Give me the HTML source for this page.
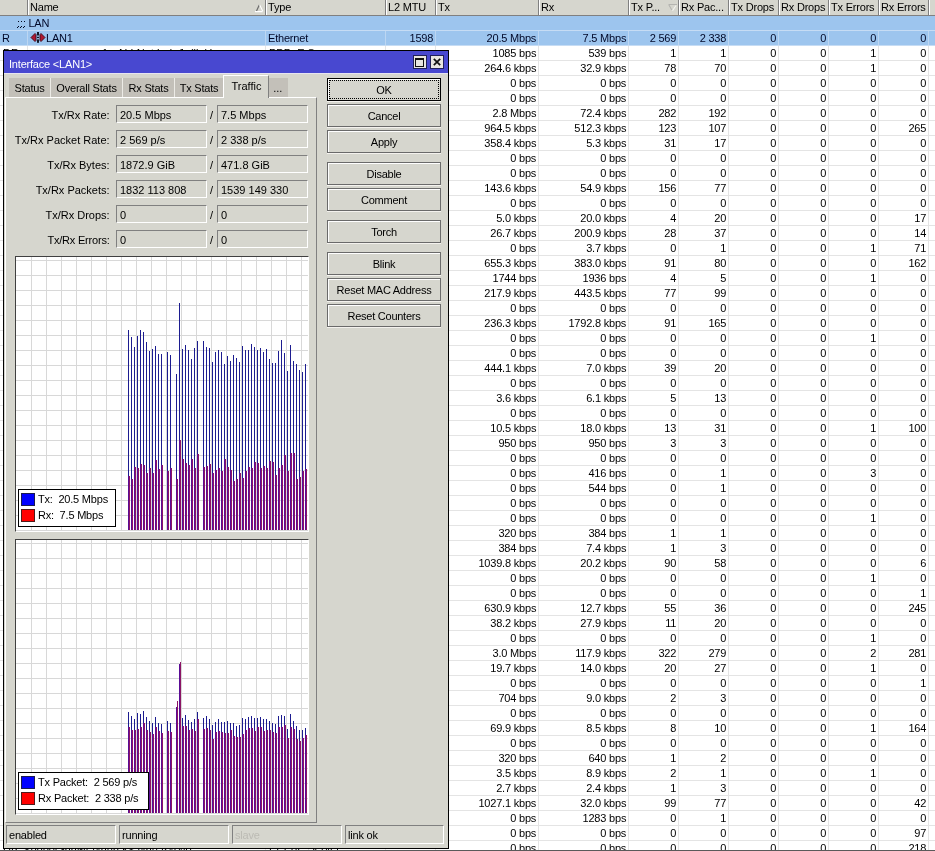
<!DOCTYPE html>
<html><head><meta charset="utf-8"><style>
html,body{margin:0;padding:0}
body{width:935px;height:851px;overflow:hidden;position:relative;background:#fff;font-family:'Liberation Sans',sans-serif;font-size:11px;color:#000}
div{position:absolute}
.t{white-space:nowrap}
</style></head><body>
<div id="wrap" style="left:0;top:0;width:935px;height:851px;will-change:transform"><div style="left:0px;top:0px;width:935px;height:15px;background:#d6d6ce"></div><div style="left:0px;top:15px;width:935px;height:1px;background:#808080"></div><div style="left:27px;top:0px;width:1px;height:15px;background:#808080"></div><div style="left:28px;top:0px;width:1px;height:15px;background:#fff"></div><div style="left:265px;top:0px;width:1px;height:15px;background:#808080"></div><div style="left:266px;top:0px;width:1px;height:15px;background:#fff"></div><div style="left:385px;top:0px;width:1px;height:15px;background:#808080"></div><div style="left:386px;top:0px;width:1px;height:15px;background:#fff"></div><div style="left:435px;top:0px;width:1px;height:15px;background:#808080"></div><div style="left:436px;top:0px;width:1px;height:15px;background:#fff"></div><div style="left:538px;top:0px;width:1px;height:15px;background:#808080"></div><div style="left:539px;top:0px;width:1px;height:15px;background:#fff"></div><div style="left:628px;top:0px;width:1px;height:15px;background:#808080"></div><div style="left:629px;top:0px;width:1px;height:15px;background:#fff"></div><div style="left:678px;top:0px;width:1px;height:15px;background:#808080"></div><div style="left:679px;top:0px;width:1px;height:15px;background:#fff"></div><div style="left:728px;top:0px;width:1px;height:15px;background:#808080"></div><div style="left:729px;top:0px;width:1px;height:15px;background:#fff"></div><div style="left:778px;top:0px;width:1px;height:15px;background:#808080"></div><div style="left:779px;top:0px;width:1px;height:15px;background:#fff"></div><div style="left:828px;top:0px;width:1px;height:15px;background:#808080"></div><div style="left:829px;top:0px;width:1px;height:15px;background:#fff"></div><div style="left:878px;top:0px;width:1px;height:15px;background:#808080"></div><div style="left:879px;top:0px;width:1px;height:15px;background:#fff"></div><div style="left:928px;top:0px;width:1px;height:15px;background:#808080"></div><div style="left:929px;top:0px;width:1px;height:15px;background:#fff"></div><div class="t" style="left:30px;top:0px;text-align:left;line-height:15px;letter-spacing:-0.2px">Name</div><div class="t" style="left:268px;top:0px;text-align:left;line-height:15px;letter-spacing:-0.2px">Type</div><div class="t" style="left:388px;top:0px;text-align:left;line-height:15px;letter-spacing:-0.2px">L2 MTU</div><div class="t" style="left:438px;top:0px;text-align:left;line-height:15px;letter-spacing:-0.2px">Tx</div><div class="t" style="left:541px;top:0px;text-align:left;line-height:15px;letter-spacing:-0.2px">Rx</div><div class="t" style="left:631px;top:0px;text-align:left;line-height:15px;letter-spacing:-0.2px">Tx P...</div><div class="t" style="left:681px;top:0px;text-align:left;line-height:15px;letter-spacing:-0.2px">Rx Pac...</div><div class="t" style="left:731px;top:0px;text-align:left;line-height:15px;letter-spacing:-0.2px">Tx Drops</div><div class="t" style="left:781px;top:0px;text-align:left;line-height:15px;letter-spacing:-0.2px">Rx Drops</div><div class="t" style="left:831px;top:0px;text-align:left;line-height:15px;letter-spacing:-0.2px">Tx Errors</div><div class="t" style="left:881px;top:0px;text-align:left;line-height:15px;letter-spacing:-0.2px">Rx Errors</div><svg style="position:absolute;left:250px;top:0" width="20" height="15"><path d="M256.5 11 L259.3 5" transform="translate(-250 0)" stroke="#6a6a6a" stroke-width="1.2" fill="none"/><path d="M259.7 5 L262.8 11.2 M255 11.6 L262.5 11.6" transform="translate(-250 0)" stroke="#ffffff" stroke-width="1.1" fill="none"/></svg><svg style="position:absolute;left:660px;top:0" width="20" height="15"><path d="M668.5 4.5 L677 4.5 M668.8 4.8 L671.8 10" transform="translate(-660 0)" stroke="#b4b4b0" stroke-width="1.1" fill="none"/><path d="M676 5.5 L672.5 10.8" transform="translate(-660 0)" stroke="#f4f4f0" stroke-width="1.1" fill="none"/></svg><div style="left:0px;top:16px;width:935px;height:14px;background:#9dc5ee"></div><div style="left:0px;top:30px;width:935px;height:1px;background:#c6dcf4"></div><div style="left:0px;top:31px;width:935px;height:14px;background:#9dc5ee"></div><div style="left:0px;top:45px;width:935px;height:1px;background:#c6dcf4"></div><div class="t" style="left:17px;top:16px;text-align:left;line-height:15px;color:#000828;letter-spacing:-0.2px"><span style="color:transparent">;;;</span>&nbsp;LAN</div><svg style="position:absolute;left:0;top:0" width="30" height="30"><rect x="18" y="21" width="1" height="1" fill="#000820"/><rect x="18" y="26" width="1" height="1" fill="#000820"/><rect x="17" y="27" width="1" height="1" fill="#000820"/><rect x="21" y="21" width="1" height="1" fill="#000820"/><rect x="21" y="26" width="1" height="1" fill="#000820"/><rect x="20" y="27" width="1" height="1" fill="#000820"/><rect x="24" y="21" width="1" height="1" fill="#000820"/><rect x="24" y="26" width="1" height="1" fill="#000820"/><rect x="23" y="27" width="1" height="1" fill="#000820"/></svg><div style="left:27px;top:31px;width:1px;height:14px;background:#bcd6f2"></div><div style="left:265px;top:31px;width:1px;height:14px;background:#bcd6f2"></div><div style="left:385px;top:31px;width:1px;height:14px;background:#bcd6f2"></div><div style="left:435px;top:31px;width:1px;height:14px;background:#bcd6f2"></div><div style="left:538px;top:31px;width:1px;height:14px;background:#bcd6f2"></div><div style="left:628px;top:31px;width:1px;height:14px;background:#bcd6f2"></div><div style="left:678px;top:31px;width:1px;height:14px;background:#bcd6f2"></div><div style="left:728px;top:31px;width:1px;height:14px;background:#bcd6f2"></div><div style="left:778px;top:31px;width:1px;height:14px;background:#bcd6f2"></div><div style="left:828px;top:31px;width:1px;height:14px;background:#bcd6f2"></div><div style="left:878px;top:31px;width:1px;height:14px;background:#bcd6f2"></div><div style="left:928px;top:31px;width:1px;height:14px;background:#bcd6f2"></div><div style="left:0px;top:60px;width:935px;height:1px;background:#e4e4e4"></div><div style="left:0px;top:75px;width:935px;height:1px;background:#e4e4e4"></div><div style="left:0px;top:90px;width:935px;height:1px;background:#e4e4e4"></div><div style="left:0px;top:105px;width:935px;height:1px;background:#e4e4e4"></div><div style="left:0px;top:120px;width:935px;height:1px;background:#e4e4e4"></div><div style="left:0px;top:135px;width:935px;height:1px;background:#e4e4e4"></div><div style="left:0px;top:150px;width:935px;height:1px;background:#e4e4e4"></div><div style="left:0px;top:165px;width:935px;height:1px;background:#e4e4e4"></div><div style="left:0px;top:180px;width:935px;height:1px;background:#e4e4e4"></div><div style="left:0px;top:195px;width:935px;height:1px;background:#e4e4e4"></div><div style="left:0px;top:210px;width:935px;height:1px;background:#e4e4e4"></div><div style="left:0px;top:225px;width:935px;height:1px;background:#e4e4e4"></div><div style="left:0px;top:240px;width:935px;height:1px;background:#e4e4e4"></div><div style="left:0px;top:255px;width:935px;height:1px;background:#e4e4e4"></div><div style="left:0px;top:270px;width:935px;height:1px;background:#e4e4e4"></div><div style="left:0px;top:285px;width:935px;height:1px;background:#e4e4e4"></div><div style="left:0px;top:300px;width:935px;height:1px;background:#e4e4e4"></div><div style="left:0px;top:315px;width:935px;height:1px;background:#e4e4e4"></div><div style="left:0px;top:330px;width:935px;height:1px;background:#e4e4e4"></div><div style="left:0px;top:345px;width:935px;height:1px;background:#e4e4e4"></div><div style="left:0px;top:360px;width:935px;height:1px;background:#e4e4e4"></div><div style="left:0px;top:375px;width:935px;height:1px;background:#e4e4e4"></div><div style="left:0px;top:390px;width:935px;height:1px;background:#e4e4e4"></div><div style="left:0px;top:405px;width:935px;height:1px;background:#e4e4e4"></div><div style="left:0px;top:420px;width:935px;height:1px;background:#e4e4e4"></div><div style="left:0px;top:435px;width:935px;height:1px;background:#e4e4e4"></div><div style="left:0px;top:450px;width:935px;height:1px;background:#e4e4e4"></div><div style="left:0px;top:465px;width:935px;height:1px;background:#e4e4e4"></div><div style="left:0px;top:480px;width:935px;height:1px;background:#e4e4e4"></div><div style="left:0px;top:495px;width:935px;height:1px;background:#e4e4e4"></div><div style="left:0px;top:510px;width:935px;height:1px;background:#e4e4e4"></div><div style="left:0px;top:525px;width:935px;height:1px;background:#e4e4e4"></div><div style="left:0px;top:540px;width:935px;height:1px;background:#e4e4e4"></div><div style="left:0px;top:555px;width:935px;height:1px;background:#e4e4e4"></div><div style="left:0px;top:570px;width:935px;height:1px;background:#e4e4e4"></div><div style="left:0px;top:585px;width:935px;height:1px;background:#e4e4e4"></div><div style="left:0px;top:600px;width:935px;height:1px;background:#e4e4e4"></div><div style="left:0px;top:615px;width:935px;height:1px;background:#e4e4e4"></div><div style="left:0px;top:630px;width:935px;height:1px;background:#e4e4e4"></div><div style="left:0px;top:645px;width:935px;height:1px;background:#e4e4e4"></div><div style="left:0px;top:660px;width:935px;height:1px;background:#e4e4e4"></div><div style="left:0px;top:675px;width:935px;height:1px;background:#e4e4e4"></div><div style="left:0px;top:690px;width:935px;height:1px;background:#e4e4e4"></div><div style="left:0px;top:705px;width:935px;height:1px;background:#e4e4e4"></div><div style="left:0px;top:720px;width:935px;height:1px;background:#e4e4e4"></div><div style="left:0px;top:735px;width:935px;height:1px;background:#e4e4e4"></div><div style="left:0px;top:750px;width:935px;height:1px;background:#e4e4e4"></div><div style="left:0px;top:765px;width:935px;height:1px;background:#e4e4e4"></div><div style="left:0px;top:780px;width:935px;height:1px;background:#e4e4e4"></div><div style="left:0px;top:795px;width:935px;height:1px;background:#e4e4e4"></div><div style="left:0px;top:810px;width:935px;height:1px;background:#e4e4e4"></div><div style="left:0px;top:825px;width:935px;height:1px;background:#e4e4e4"></div><div style="left:0px;top:840px;width:935px;height:1px;background:#e4e4e4"></div><div style="left:0px;top:855px;width:935px;height:1px;background:#e4e4e4"></div><div style="left:27px;top:46px;width:1px;height:805px;background:#e4e4e4"></div><div style="left:265px;top:46px;width:1px;height:805px;background:#e4e4e4"></div><div style="left:385px;top:46px;width:1px;height:805px;background:#e4e4e4"></div><div style="left:435px;top:46px;width:1px;height:805px;background:#e4e4e4"></div><div style="left:538px;top:46px;width:1px;height:805px;background:#e4e4e4"></div><div style="left:628px;top:46px;width:1px;height:805px;background:#e4e4e4"></div><div style="left:678px;top:46px;width:1px;height:805px;background:#e4e4e4"></div><div style="left:728px;top:46px;width:1px;height:805px;background:#e4e4e4"></div><div style="left:778px;top:46px;width:1px;height:805px;background:#e4e4e4"></div><div style="left:828px;top:46px;width:1px;height:805px;background:#e4e4e4"></div><div style="left:878px;top:46px;width:1px;height:805px;background:#e4e4e4"></div><div style="left:928px;top:46px;width:1px;height:805px;background:#e4e4e4"></div><div class="t" style="left:2px;top:31px;text-align:left;line-height:15px;color:#000828">R</div><div class="t" style="left:46px;top:31px;text-align:left;line-height:15px;color:#000828;letter-spacing:-0.2px">LAN1</div><div class="t" style="left:268px;top:31px;text-align:left;line-height:15px;letter-spacing:-0.2px;color:#000828">Ethernet</div><div class="t" style="left:385px;top:31px;width:48.2px;text-align:right;line-height:15px;letter-spacing:-0.2px;color:#000828">1598</div><svg style="position:absolute;left:0;top:0" width="50" height="46" viewBox="0 0 50 46"><path d="M31 37.5 L35 33.5 L36 34.5 L36 40.5 L35 41.5 Z" fill="#b01830" stroke="#3a0818" stroke-width="0.9"/><path d="M45 37.5 L41 33.5 L40 34.5 L40 40.5 L41 41.5 Z" fill="#b01830" stroke="#3a0818" stroke-width="0.9"/><rect x="37" y="32" width="2" height="3.5" fill="#101828"/><rect x="37" y="36.8" width="2" height="1.3" fill="#101828"/><rect x="37" y="39.4" width="2" height="3.4" fill="#101828"/></svg><div class="t" style="left:435px;top:31px;width:101.2px;text-align:right;line-height:15px;letter-spacing:-0.2px;color:#000828">20.5 Mbps</div><div class="t" style="left:538px;top:31px;width:88.2px;text-align:right;line-height:15px;letter-spacing:-0.2px;color:#000828">7.5 Mbps</div><div class="t" style="left:628px;top:31px;width:48.2px;text-align:right;line-height:15px;letter-spacing:-0.2px;color:#000828">2 569</div><div class="t" style="left:678px;top:31px;width:48.2px;text-align:right;line-height:15px;letter-spacing:-0.2px;color:#000828">2 338</div><div class="t" style="left:728px;top:31px;width:48.2px;text-align:right;line-height:15px;letter-spacing:-0.2px;color:#000828">0</div><div class="t" style="left:778px;top:31px;width:48.2px;text-align:right;line-height:15px;letter-spacing:-0.2px;color:#000828">0</div><div class="t" style="left:828px;top:31px;width:48.2px;text-align:right;line-height:15px;letter-spacing:-0.2px;color:#000828">0</div><div class="t" style="left:878px;top:31px;width:48.2px;text-align:right;line-height:15px;letter-spacing:-0.2px;color:#000828">0</div><div class="t" style="left:435px;top:46px;width:101.2px;text-align:right;line-height:15px;letter-spacing:-0.2px">1085 bps</div><div class="t" style="left:538px;top:46px;width:88.2px;text-align:right;line-height:15px;letter-spacing:-0.2px">539 bps</div><div class="t" style="left:628px;top:46px;width:48.2px;text-align:right;line-height:15px;letter-spacing:-0.2px">1</div><div class="t" style="left:678px;top:46px;width:48.2px;text-align:right;line-height:15px;letter-spacing:-0.2px">1</div><div class="t" style="left:728px;top:46px;width:48.2px;text-align:right;line-height:15px;letter-spacing:-0.2px">0</div><div class="t" style="left:778px;top:46px;width:48.2px;text-align:right;line-height:15px;letter-spacing:-0.2px">0</div><div class="t" style="left:828px;top:46px;width:48.2px;text-align:right;line-height:15px;letter-spacing:-0.2px">1</div><div class="t" style="left:878px;top:46px;width:48.2px;text-align:right;line-height:15px;letter-spacing:-0.2px">0</div><div class="t" style="left:435px;top:61px;width:101.2px;text-align:right;line-height:15px;letter-spacing:-0.2px">264.6 kbps</div><div class="t" style="left:538px;top:61px;width:88.2px;text-align:right;line-height:15px;letter-spacing:-0.2px">32.9 kbps</div><div class="t" style="left:628px;top:61px;width:48.2px;text-align:right;line-height:15px;letter-spacing:-0.2px">78</div><div class="t" style="left:678px;top:61px;width:48.2px;text-align:right;line-height:15px;letter-spacing:-0.2px">70</div><div class="t" style="left:728px;top:61px;width:48.2px;text-align:right;line-height:15px;letter-spacing:-0.2px">0</div><div class="t" style="left:778px;top:61px;width:48.2px;text-align:right;line-height:15px;letter-spacing:-0.2px">0</div><div class="t" style="left:828px;top:61px;width:48.2px;text-align:right;line-height:15px;letter-spacing:-0.2px">1</div><div class="t" style="left:878px;top:61px;width:48.2px;text-align:right;line-height:15px;letter-spacing:-0.2px">0</div><div class="t" style="left:435px;top:76px;width:101.2px;text-align:right;line-height:15px;letter-spacing:-0.2px">0 bps</div><div class="t" style="left:538px;top:76px;width:88.2px;text-align:right;line-height:15px;letter-spacing:-0.2px">0 bps</div><div class="t" style="left:628px;top:76px;width:48.2px;text-align:right;line-height:15px;letter-spacing:-0.2px">0</div><div class="t" style="left:678px;top:76px;width:48.2px;text-align:right;line-height:15px;letter-spacing:-0.2px">0</div><div class="t" style="left:728px;top:76px;width:48.2px;text-align:right;line-height:15px;letter-spacing:-0.2px">0</div><div class="t" style="left:778px;top:76px;width:48.2px;text-align:right;line-height:15px;letter-spacing:-0.2px">0</div><div class="t" style="left:828px;top:76px;width:48.2px;text-align:right;line-height:15px;letter-spacing:-0.2px">0</div><div class="t" style="left:878px;top:76px;width:48.2px;text-align:right;line-height:15px;letter-spacing:-0.2px">0</div><div class="t" style="left:435px;top:91px;width:101.2px;text-align:right;line-height:15px;letter-spacing:-0.2px">0 bps</div><div class="t" style="left:538px;top:91px;width:88.2px;text-align:right;line-height:15px;letter-spacing:-0.2px">0 bps</div><div class="t" style="left:628px;top:91px;width:48.2px;text-align:right;line-height:15px;letter-spacing:-0.2px">0</div><div class="t" style="left:678px;top:91px;width:48.2px;text-align:right;line-height:15px;letter-spacing:-0.2px">0</div><div class="t" style="left:728px;top:91px;width:48.2px;text-align:right;line-height:15px;letter-spacing:-0.2px">0</div><div class="t" style="left:778px;top:91px;width:48.2px;text-align:right;line-height:15px;letter-spacing:-0.2px">0</div><div class="t" style="left:828px;top:91px;width:48.2px;text-align:right;line-height:15px;letter-spacing:-0.2px">0</div><div class="t" style="left:878px;top:91px;width:48.2px;text-align:right;line-height:15px;letter-spacing:-0.2px">0</div><div class="t" style="left:435px;top:106px;width:101.2px;text-align:right;line-height:15px;letter-spacing:-0.2px">2.8 Mbps</div><div class="t" style="left:538px;top:106px;width:88.2px;text-align:right;line-height:15px;letter-spacing:-0.2px">72.4 kbps</div><div class="t" style="left:628px;top:106px;width:48.2px;text-align:right;line-height:15px;letter-spacing:-0.2px">282</div><div class="t" style="left:678px;top:106px;width:48.2px;text-align:right;line-height:15px;letter-spacing:-0.2px">192</div><div class="t" style="left:728px;top:106px;width:48.2px;text-align:right;line-height:15px;letter-spacing:-0.2px">0</div><div class="t" style="left:778px;top:106px;width:48.2px;text-align:right;line-height:15px;letter-spacing:-0.2px">0</div><div class="t" style="left:828px;top:106px;width:48.2px;text-align:right;line-height:15px;letter-spacing:-0.2px">0</div><div class="t" style="left:878px;top:106px;width:48.2px;text-align:right;line-height:15px;letter-spacing:-0.2px">0</div><div class="t" style="left:435px;top:121px;width:101.2px;text-align:right;line-height:15px;letter-spacing:-0.2px">964.5 kbps</div><div class="t" style="left:538px;top:121px;width:88.2px;text-align:right;line-height:15px;letter-spacing:-0.2px">512.3 kbps</div><div class="t" style="left:628px;top:121px;width:48.2px;text-align:right;line-height:15px;letter-spacing:-0.2px">123</div><div class="t" style="left:678px;top:121px;width:48.2px;text-align:right;line-height:15px;letter-spacing:-0.2px">107</div><div class="t" style="left:728px;top:121px;width:48.2px;text-align:right;line-height:15px;letter-spacing:-0.2px">0</div><div class="t" style="left:778px;top:121px;width:48.2px;text-align:right;line-height:15px;letter-spacing:-0.2px">0</div><div class="t" style="left:828px;top:121px;width:48.2px;text-align:right;line-height:15px;letter-spacing:-0.2px">0</div><div class="t" style="left:878px;top:121px;width:48.2px;text-align:right;line-height:15px;letter-spacing:-0.2px">265</div><div class="t" style="left:435px;top:136px;width:101.2px;text-align:right;line-height:15px;letter-spacing:-0.2px">358.4 kbps</div><div class="t" style="left:538px;top:136px;width:88.2px;text-align:right;line-height:15px;letter-spacing:-0.2px">5.3 kbps</div><div class="t" style="left:628px;top:136px;width:48.2px;text-align:right;line-height:15px;letter-spacing:-0.2px">31</div><div class="t" style="left:678px;top:136px;width:48.2px;text-align:right;line-height:15px;letter-spacing:-0.2px">17</div><div class="t" style="left:728px;top:136px;width:48.2px;text-align:right;line-height:15px;letter-spacing:-0.2px">0</div><div class="t" style="left:778px;top:136px;width:48.2px;text-align:right;line-height:15px;letter-spacing:-0.2px">0</div><div class="t" style="left:828px;top:136px;width:48.2px;text-align:right;line-height:15px;letter-spacing:-0.2px">0</div><div class="t" style="left:878px;top:136px;width:48.2px;text-align:right;line-height:15px;letter-spacing:-0.2px">0</div><div class="t" style="left:435px;top:151px;width:101.2px;text-align:right;line-height:15px;letter-spacing:-0.2px">0 bps</div><div class="t" style="left:538px;top:151px;width:88.2px;text-align:right;line-height:15px;letter-spacing:-0.2px">0 bps</div><div class="t" style="left:628px;top:151px;width:48.2px;text-align:right;line-height:15px;letter-spacing:-0.2px">0</div><div class="t" style="left:678px;top:151px;width:48.2px;text-align:right;line-height:15px;letter-spacing:-0.2px">0</div><div class="t" style="left:728px;top:151px;width:48.2px;text-align:right;line-height:15px;letter-spacing:-0.2px">0</div><div class="t" style="left:778px;top:151px;width:48.2px;text-align:right;line-height:15px;letter-spacing:-0.2px">0</div><div class="t" style="left:828px;top:151px;width:48.2px;text-align:right;line-height:15px;letter-spacing:-0.2px">0</div><div class="t" style="left:878px;top:151px;width:48.2px;text-align:right;line-height:15px;letter-spacing:-0.2px">0</div><div class="t" style="left:435px;top:166px;width:101.2px;text-align:right;line-height:15px;letter-spacing:-0.2px">0 bps</div><div class="t" style="left:538px;top:166px;width:88.2px;text-align:right;line-height:15px;letter-spacing:-0.2px">0 bps</div><div class="t" style="left:628px;top:166px;width:48.2px;text-align:right;line-height:15px;letter-spacing:-0.2px">0</div><div class="t" style="left:678px;top:166px;width:48.2px;text-align:right;line-height:15px;letter-spacing:-0.2px">0</div><div class="t" style="left:728px;top:166px;width:48.2px;text-align:right;line-height:15px;letter-spacing:-0.2px">0</div><div class="t" style="left:778px;top:166px;width:48.2px;text-align:right;line-height:15px;letter-spacing:-0.2px">0</div><div class="t" style="left:828px;top:166px;width:48.2px;text-align:right;line-height:15px;letter-spacing:-0.2px">0</div><div class="t" style="left:878px;top:166px;width:48.2px;text-align:right;line-height:15px;letter-spacing:-0.2px">0</div><div class="t" style="left:435px;top:181px;width:101.2px;text-align:right;line-height:15px;letter-spacing:-0.2px">143.6 kbps</div><div class="t" style="left:538px;top:181px;width:88.2px;text-align:right;line-height:15px;letter-spacing:-0.2px">54.9 kbps</div><div class="t" style="left:628px;top:181px;width:48.2px;text-align:right;line-height:15px;letter-spacing:-0.2px">156</div><div class="t" style="left:678px;top:181px;width:48.2px;text-align:right;line-height:15px;letter-spacing:-0.2px">77</div><div class="t" style="left:728px;top:181px;width:48.2px;text-align:right;line-height:15px;letter-spacing:-0.2px">0</div><div class="t" style="left:778px;top:181px;width:48.2px;text-align:right;line-height:15px;letter-spacing:-0.2px">0</div><div class="t" style="left:828px;top:181px;width:48.2px;text-align:right;line-height:15px;letter-spacing:-0.2px">0</div><div class="t" style="left:878px;top:181px;width:48.2px;text-align:right;line-height:15px;letter-spacing:-0.2px">0</div><div class="t" style="left:435px;top:196px;width:101.2px;text-align:right;line-height:15px;letter-spacing:-0.2px">0 bps</div><div class="t" style="left:538px;top:196px;width:88.2px;text-align:right;line-height:15px;letter-spacing:-0.2px">0 bps</div><div class="t" style="left:628px;top:196px;width:48.2px;text-align:right;line-height:15px;letter-spacing:-0.2px">0</div><div class="t" style="left:678px;top:196px;width:48.2px;text-align:right;line-height:15px;letter-spacing:-0.2px">0</div><div class="t" style="left:728px;top:196px;width:48.2px;text-align:right;line-height:15px;letter-spacing:-0.2px">0</div><div class="t" style="left:778px;top:196px;width:48.2px;text-align:right;line-height:15px;letter-spacing:-0.2px">0</div><div class="t" style="left:828px;top:196px;width:48.2px;text-align:right;line-height:15px;letter-spacing:-0.2px">0</div><div class="t" style="left:878px;top:196px;width:48.2px;text-align:right;line-height:15px;letter-spacing:-0.2px">0</div><div class="t" style="left:435px;top:211px;width:101.2px;text-align:right;line-height:15px;letter-spacing:-0.2px">5.0 kbps</div><div class="t" style="left:538px;top:211px;width:88.2px;text-align:right;line-height:15px;letter-spacing:-0.2px">20.0 kbps</div><div class="t" style="left:628px;top:211px;width:48.2px;text-align:right;line-height:15px;letter-spacing:-0.2px">4</div><div class="t" style="left:678px;top:211px;width:48.2px;text-align:right;line-height:15px;letter-spacing:-0.2px">20</div><div class="t" style="left:728px;top:211px;width:48.2px;text-align:right;line-height:15px;letter-spacing:-0.2px">0</div><div class="t" style="left:778px;top:211px;width:48.2px;text-align:right;line-height:15px;letter-spacing:-0.2px">0</div><div class="t" style="left:828px;top:211px;width:48.2px;text-align:right;line-height:15px;letter-spacing:-0.2px">0</div><div class="t" style="left:878px;top:211px;width:48.2px;text-align:right;line-height:15px;letter-spacing:-0.2px">17</div><div class="t" style="left:435px;top:226px;width:101.2px;text-align:right;line-height:15px;letter-spacing:-0.2px">26.7 kbps</div><div class="t" style="left:538px;top:226px;width:88.2px;text-align:right;line-height:15px;letter-spacing:-0.2px">200.9 kbps</div><div class="t" style="left:628px;top:226px;width:48.2px;text-align:right;line-height:15px;letter-spacing:-0.2px">28</div><div class="t" style="left:678px;top:226px;width:48.2px;text-align:right;line-height:15px;letter-spacing:-0.2px">37</div><div class="t" style="left:728px;top:226px;width:48.2px;text-align:right;line-height:15px;letter-spacing:-0.2px">0</div><div class="t" style="left:778px;top:226px;width:48.2px;text-align:right;line-height:15px;letter-spacing:-0.2px">0</div><div class="t" style="left:828px;top:226px;width:48.2px;text-align:right;line-height:15px;letter-spacing:-0.2px">0</div><div class="t" style="left:878px;top:226px;width:48.2px;text-align:right;line-height:15px;letter-spacing:-0.2px">14</div><div class="t" style="left:435px;top:241px;width:101.2px;text-align:right;line-height:15px;letter-spacing:-0.2px">0 bps</div><div class="t" style="left:538px;top:241px;width:88.2px;text-align:right;line-height:15px;letter-spacing:-0.2px">3.7 kbps</div><div class="t" style="left:628px;top:241px;width:48.2px;text-align:right;line-height:15px;letter-spacing:-0.2px">0</div><div class="t" style="left:678px;top:241px;width:48.2px;text-align:right;line-height:15px;letter-spacing:-0.2px">1</div><div class="t" style="left:728px;top:241px;width:48.2px;text-align:right;line-height:15px;letter-spacing:-0.2px">0</div><div class="t" style="left:778px;top:241px;width:48.2px;text-align:right;line-height:15px;letter-spacing:-0.2px">0</div><div class="t" style="left:828px;top:241px;width:48.2px;text-align:right;line-height:15px;letter-spacing:-0.2px">1</div><div class="t" style="left:878px;top:241px;width:48.2px;text-align:right;line-height:15px;letter-spacing:-0.2px">71</div><div class="t" style="left:435px;top:256px;width:101.2px;text-align:right;line-height:15px;letter-spacing:-0.2px">655.3 kbps</div><div class="t" style="left:538px;top:256px;width:88.2px;text-align:right;line-height:15px;letter-spacing:-0.2px">383.0 kbps</div><div class="t" style="left:628px;top:256px;width:48.2px;text-align:right;line-height:15px;letter-spacing:-0.2px">91</div><div class="t" style="left:678px;top:256px;width:48.2px;text-align:right;line-height:15px;letter-spacing:-0.2px">80</div><div class="t" style="left:728px;top:256px;width:48.2px;text-align:right;line-height:15px;letter-spacing:-0.2px">0</div><div class="t" style="left:778px;top:256px;width:48.2px;text-align:right;line-height:15px;letter-spacing:-0.2px">0</div><div class="t" style="left:828px;top:256px;width:48.2px;text-align:right;line-height:15px;letter-spacing:-0.2px">0</div><div class="t" style="left:878px;top:256px;width:48.2px;text-align:right;line-height:15px;letter-spacing:-0.2px">162</div><div class="t" style="left:435px;top:271px;width:101.2px;text-align:right;line-height:15px;letter-spacing:-0.2px">1744 bps</div><div class="t" style="left:538px;top:271px;width:88.2px;text-align:right;line-height:15px;letter-spacing:-0.2px">1936 bps</div><div class="t" style="left:628px;top:271px;width:48.2px;text-align:right;line-height:15px;letter-spacing:-0.2px">4</div><div class="t" style="left:678px;top:271px;width:48.2px;text-align:right;line-height:15px;letter-spacing:-0.2px">5</div><div class="t" style="left:728px;top:271px;width:48.2px;text-align:right;line-height:15px;letter-spacing:-0.2px">0</div><div class="t" style="left:778px;top:271px;width:48.2px;text-align:right;line-height:15px;letter-spacing:-0.2px">0</div><div class="t" style="left:828px;top:271px;width:48.2px;text-align:right;line-height:15px;letter-spacing:-0.2px">1</div><div class="t" style="left:878px;top:271px;width:48.2px;text-align:right;line-height:15px;letter-spacing:-0.2px">0</div><div class="t" style="left:435px;top:286px;width:101.2px;text-align:right;line-height:15px;letter-spacing:-0.2px">217.9 kbps</div><div class="t" style="left:538px;top:286px;width:88.2px;text-align:right;line-height:15px;letter-spacing:-0.2px">443.5 kbps</div><div class="t" style="left:628px;top:286px;width:48.2px;text-align:right;line-height:15px;letter-spacing:-0.2px">77</div><div class="t" style="left:678px;top:286px;width:48.2px;text-align:right;line-height:15px;letter-spacing:-0.2px">99</div><div class="t" style="left:728px;top:286px;width:48.2px;text-align:right;line-height:15px;letter-spacing:-0.2px">0</div><div class="t" style="left:778px;top:286px;width:48.2px;text-align:right;line-height:15px;letter-spacing:-0.2px">0</div><div class="t" style="left:828px;top:286px;width:48.2px;text-align:right;line-height:15px;letter-spacing:-0.2px">0</div><div class="t" style="left:878px;top:286px;width:48.2px;text-align:right;line-height:15px;letter-spacing:-0.2px">0</div><div class="t" style="left:435px;top:301px;width:101.2px;text-align:right;line-height:15px;letter-spacing:-0.2px">0 bps</div><div class="t" style="left:538px;top:301px;width:88.2px;text-align:right;line-height:15px;letter-spacing:-0.2px">0 bps</div><div class="t" style="left:628px;top:301px;width:48.2px;text-align:right;line-height:15px;letter-spacing:-0.2px">0</div><div class="t" style="left:678px;top:301px;width:48.2px;text-align:right;line-height:15px;letter-spacing:-0.2px">0</div><div class="t" style="left:728px;top:301px;width:48.2px;text-align:right;line-height:15px;letter-spacing:-0.2px">0</div><div class="t" style="left:778px;top:301px;width:48.2px;text-align:right;line-height:15px;letter-spacing:-0.2px">0</div><div class="t" style="left:828px;top:301px;width:48.2px;text-align:right;line-height:15px;letter-spacing:-0.2px">0</div><div class="t" style="left:878px;top:301px;width:48.2px;text-align:right;line-height:15px;letter-spacing:-0.2px">0</div><div class="t" style="left:435px;top:316px;width:101.2px;text-align:right;line-height:15px;letter-spacing:-0.2px">236.3 kbps</div><div class="t" style="left:538px;top:316px;width:88.2px;text-align:right;line-height:15px;letter-spacing:-0.2px">1792.8 kbps</div><div class="t" style="left:628px;top:316px;width:48.2px;text-align:right;line-height:15px;letter-spacing:-0.2px">91</div><div class="t" style="left:678px;top:316px;width:48.2px;text-align:right;line-height:15px;letter-spacing:-0.2px">165</div><div class="t" style="left:728px;top:316px;width:48.2px;text-align:right;line-height:15px;letter-spacing:-0.2px">0</div><div class="t" style="left:778px;top:316px;width:48.2px;text-align:right;line-height:15px;letter-spacing:-0.2px">0</div><div class="t" style="left:828px;top:316px;width:48.2px;text-align:right;line-height:15px;letter-spacing:-0.2px">0</div><div class="t" style="left:878px;top:316px;width:48.2px;text-align:right;line-height:15px;letter-spacing:-0.2px">0</div><div class="t" style="left:435px;top:331px;width:101.2px;text-align:right;line-height:15px;letter-spacing:-0.2px">0 bps</div><div class="t" style="left:538px;top:331px;width:88.2px;text-align:right;line-height:15px;letter-spacing:-0.2px">0 bps</div><div class="t" style="left:628px;top:331px;width:48.2px;text-align:right;line-height:15px;letter-spacing:-0.2px">0</div><div class="t" style="left:678px;top:331px;width:48.2px;text-align:right;line-height:15px;letter-spacing:-0.2px">0</div><div class="t" style="left:728px;top:331px;width:48.2px;text-align:right;line-height:15px;letter-spacing:-0.2px">0</div><div class="t" style="left:778px;top:331px;width:48.2px;text-align:right;line-height:15px;letter-spacing:-0.2px">0</div><div class="t" style="left:828px;top:331px;width:48.2px;text-align:right;line-height:15px;letter-spacing:-0.2px">1</div><div class="t" style="left:878px;top:331px;width:48.2px;text-align:right;line-height:15px;letter-spacing:-0.2px">0</div><div class="t" style="left:435px;top:346px;width:101.2px;text-align:right;line-height:15px;letter-spacing:-0.2px">0 bps</div><div class="t" style="left:538px;top:346px;width:88.2px;text-align:right;line-height:15px;letter-spacing:-0.2px">0 bps</div><div class="t" style="left:628px;top:346px;width:48.2px;text-align:right;line-height:15px;letter-spacing:-0.2px">0</div><div class="t" style="left:678px;top:346px;width:48.2px;text-align:right;line-height:15px;letter-spacing:-0.2px">0</div><div class="t" style="left:728px;top:346px;width:48.2px;text-align:right;line-height:15px;letter-spacing:-0.2px">0</div><div class="t" style="left:778px;top:346px;width:48.2px;text-align:right;line-height:15px;letter-spacing:-0.2px">0</div><div class="t" style="left:828px;top:346px;width:48.2px;text-align:right;line-height:15px;letter-spacing:-0.2px">0</div><div class="t" style="left:878px;top:346px;width:48.2px;text-align:right;line-height:15px;letter-spacing:-0.2px">0</div><div class="t" style="left:435px;top:361px;width:101.2px;text-align:right;line-height:15px;letter-spacing:-0.2px">444.1 kbps</div><div class="t" style="left:538px;top:361px;width:88.2px;text-align:right;line-height:15px;letter-spacing:-0.2px">7.0 kbps</div><div class="t" style="left:628px;top:361px;width:48.2px;text-align:right;line-height:15px;letter-spacing:-0.2px">39</div><div class="t" style="left:678px;top:361px;width:48.2px;text-align:right;line-height:15px;letter-spacing:-0.2px">20</div><div class="t" style="left:728px;top:361px;width:48.2px;text-align:right;line-height:15px;letter-spacing:-0.2px">0</div><div class="t" style="left:778px;top:361px;width:48.2px;text-align:right;line-height:15px;letter-spacing:-0.2px">0</div><div class="t" style="left:828px;top:361px;width:48.2px;text-align:right;line-height:15px;letter-spacing:-0.2px">0</div><div class="t" style="left:878px;top:361px;width:48.2px;text-align:right;line-height:15px;letter-spacing:-0.2px">0</div><div class="t" style="left:435px;top:376px;width:101.2px;text-align:right;line-height:15px;letter-spacing:-0.2px">0 bps</div><div class="t" style="left:538px;top:376px;width:88.2px;text-align:right;line-height:15px;letter-spacing:-0.2px">0 bps</div><div class="t" style="left:628px;top:376px;width:48.2px;text-align:right;line-height:15px;letter-spacing:-0.2px">0</div><div class="t" style="left:678px;top:376px;width:48.2px;text-align:right;line-height:15px;letter-spacing:-0.2px">0</div><div class="t" style="left:728px;top:376px;width:48.2px;text-align:right;line-height:15px;letter-spacing:-0.2px">0</div><div class="t" style="left:778px;top:376px;width:48.2px;text-align:right;line-height:15px;letter-spacing:-0.2px">0</div><div class="t" style="left:828px;top:376px;width:48.2px;text-align:right;line-height:15px;letter-spacing:-0.2px">0</div><div class="t" style="left:878px;top:376px;width:48.2px;text-align:right;line-height:15px;letter-spacing:-0.2px">0</div><div class="t" style="left:435px;top:391px;width:101.2px;text-align:right;line-height:15px;letter-spacing:-0.2px">3.6 kbps</div><div class="t" style="left:538px;top:391px;width:88.2px;text-align:right;line-height:15px;letter-spacing:-0.2px">6.1 kbps</div><div class="t" style="left:628px;top:391px;width:48.2px;text-align:right;line-height:15px;letter-spacing:-0.2px">5</div><div class="t" style="left:678px;top:391px;width:48.2px;text-align:right;line-height:15px;letter-spacing:-0.2px">13</div><div class="t" style="left:728px;top:391px;width:48.2px;text-align:right;line-height:15px;letter-spacing:-0.2px">0</div><div class="t" style="left:778px;top:391px;width:48.2px;text-align:right;line-height:15px;letter-spacing:-0.2px">0</div><div class="t" style="left:828px;top:391px;width:48.2px;text-align:right;line-height:15px;letter-spacing:-0.2px">0</div><div class="t" style="left:878px;top:391px;width:48.2px;text-align:right;line-height:15px;letter-spacing:-0.2px">0</div><div class="t" style="left:435px;top:406px;width:101.2px;text-align:right;line-height:15px;letter-spacing:-0.2px">0 bps</div><div class="t" style="left:538px;top:406px;width:88.2px;text-align:right;line-height:15px;letter-spacing:-0.2px">0 bps</div><div class="t" style="left:628px;top:406px;width:48.2px;text-align:right;line-height:15px;letter-spacing:-0.2px">0</div><div class="t" style="left:678px;top:406px;width:48.2px;text-align:right;line-height:15px;letter-spacing:-0.2px">0</div><div class="t" style="left:728px;top:406px;width:48.2px;text-align:right;line-height:15px;letter-spacing:-0.2px">0</div><div class="t" style="left:778px;top:406px;width:48.2px;text-align:right;line-height:15px;letter-spacing:-0.2px">0</div><div class="t" style="left:828px;top:406px;width:48.2px;text-align:right;line-height:15px;letter-spacing:-0.2px">0</div><div class="t" style="left:878px;top:406px;width:48.2px;text-align:right;line-height:15px;letter-spacing:-0.2px">0</div><div class="t" style="left:435px;top:421px;width:101.2px;text-align:right;line-height:15px;letter-spacing:-0.2px">10.5 kbps</div><div class="t" style="left:538px;top:421px;width:88.2px;text-align:right;line-height:15px;letter-spacing:-0.2px">18.0 kbps</div><div class="t" style="left:628px;top:421px;width:48.2px;text-align:right;line-height:15px;letter-spacing:-0.2px">13</div><div class="t" style="left:678px;top:421px;width:48.2px;text-align:right;line-height:15px;letter-spacing:-0.2px">31</div><div class="t" style="left:728px;top:421px;width:48.2px;text-align:right;line-height:15px;letter-spacing:-0.2px">0</div><div class="t" style="left:778px;top:421px;width:48.2px;text-align:right;line-height:15px;letter-spacing:-0.2px">0</div><div class="t" style="left:828px;top:421px;width:48.2px;text-align:right;line-height:15px;letter-spacing:-0.2px">1</div><div class="t" style="left:878px;top:421px;width:48.2px;text-align:right;line-height:15px;letter-spacing:-0.2px">100</div><div class="t" style="left:435px;top:436px;width:101.2px;text-align:right;line-height:15px;letter-spacing:-0.2px">950 bps</div><div class="t" style="left:538px;top:436px;width:88.2px;text-align:right;line-height:15px;letter-spacing:-0.2px">950 bps</div><div class="t" style="left:628px;top:436px;width:48.2px;text-align:right;line-height:15px;letter-spacing:-0.2px">3</div><div class="t" style="left:678px;top:436px;width:48.2px;text-align:right;line-height:15px;letter-spacing:-0.2px">3</div><div class="t" style="left:728px;top:436px;width:48.2px;text-align:right;line-height:15px;letter-spacing:-0.2px">0</div><div class="t" style="left:778px;top:436px;width:48.2px;text-align:right;line-height:15px;letter-spacing:-0.2px">0</div><div class="t" style="left:828px;top:436px;width:48.2px;text-align:right;line-height:15px;letter-spacing:-0.2px">0</div><div class="t" style="left:878px;top:436px;width:48.2px;text-align:right;line-height:15px;letter-spacing:-0.2px">0</div><div class="t" style="left:435px;top:451px;width:101.2px;text-align:right;line-height:15px;letter-spacing:-0.2px">0 bps</div><div class="t" style="left:538px;top:451px;width:88.2px;text-align:right;line-height:15px;letter-spacing:-0.2px">0 bps</div><div class="t" style="left:628px;top:451px;width:48.2px;text-align:right;line-height:15px;letter-spacing:-0.2px">0</div><div class="t" style="left:678px;top:451px;width:48.2px;text-align:right;line-height:15px;letter-spacing:-0.2px">0</div><div class="t" style="left:728px;top:451px;width:48.2px;text-align:right;line-height:15px;letter-spacing:-0.2px">0</div><div class="t" style="left:778px;top:451px;width:48.2px;text-align:right;line-height:15px;letter-spacing:-0.2px">0</div><div class="t" style="left:828px;top:451px;width:48.2px;text-align:right;line-height:15px;letter-spacing:-0.2px">0</div><div class="t" style="left:878px;top:451px;width:48.2px;text-align:right;line-height:15px;letter-spacing:-0.2px">0</div><div class="t" style="left:435px;top:466px;width:101.2px;text-align:right;line-height:15px;letter-spacing:-0.2px">0 bps</div><div class="t" style="left:538px;top:466px;width:88.2px;text-align:right;line-height:15px;letter-spacing:-0.2px">416 bps</div><div class="t" style="left:628px;top:466px;width:48.2px;text-align:right;line-height:15px;letter-spacing:-0.2px">0</div><div class="t" style="left:678px;top:466px;width:48.2px;text-align:right;line-height:15px;letter-spacing:-0.2px">1</div><div class="t" style="left:728px;top:466px;width:48.2px;text-align:right;line-height:15px;letter-spacing:-0.2px">0</div><div class="t" style="left:778px;top:466px;width:48.2px;text-align:right;line-height:15px;letter-spacing:-0.2px">0</div><div class="t" style="left:828px;top:466px;width:48.2px;text-align:right;line-height:15px;letter-spacing:-0.2px">3</div><div class="t" style="left:878px;top:466px;width:48.2px;text-align:right;line-height:15px;letter-spacing:-0.2px">0</div><div class="t" style="left:435px;top:481px;width:101.2px;text-align:right;line-height:15px;letter-spacing:-0.2px">0 bps</div><div class="t" style="left:538px;top:481px;width:88.2px;text-align:right;line-height:15px;letter-spacing:-0.2px">544 bps</div><div class="t" style="left:628px;top:481px;width:48.2px;text-align:right;line-height:15px;letter-spacing:-0.2px">0</div><div class="t" style="left:678px;top:481px;width:48.2px;text-align:right;line-height:15px;letter-spacing:-0.2px">1</div><div class="t" style="left:728px;top:481px;width:48.2px;text-align:right;line-height:15px;letter-spacing:-0.2px">0</div><div class="t" style="left:778px;top:481px;width:48.2px;text-align:right;line-height:15px;letter-spacing:-0.2px">0</div><div class="t" style="left:828px;top:481px;width:48.2px;text-align:right;line-height:15px;letter-spacing:-0.2px">0</div><div class="t" style="left:878px;top:481px;width:48.2px;text-align:right;line-height:15px;letter-spacing:-0.2px">0</div><div class="t" style="left:435px;top:496px;width:101.2px;text-align:right;line-height:15px;letter-spacing:-0.2px">0 bps</div><div class="t" style="left:538px;top:496px;width:88.2px;text-align:right;line-height:15px;letter-spacing:-0.2px">0 bps</div><div class="t" style="left:628px;top:496px;width:48.2px;text-align:right;line-height:15px;letter-spacing:-0.2px">0</div><div class="t" style="left:678px;top:496px;width:48.2px;text-align:right;line-height:15px;letter-spacing:-0.2px">0</div><div class="t" style="left:728px;top:496px;width:48.2px;text-align:right;line-height:15px;letter-spacing:-0.2px">0</div><div class="t" style="left:778px;top:496px;width:48.2px;text-align:right;line-height:15px;letter-spacing:-0.2px">0</div><div class="t" style="left:828px;top:496px;width:48.2px;text-align:right;line-height:15px;letter-spacing:-0.2px">0</div><div class="t" style="left:878px;top:496px;width:48.2px;text-align:right;line-height:15px;letter-spacing:-0.2px">0</div><div class="t" style="left:435px;top:511px;width:101.2px;text-align:right;line-height:15px;letter-spacing:-0.2px">0 bps</div><div class="t" style="left:538px;top:511px;width:88.2px;text-align:right;line-height:15px;letter-spacing:-0.2px">0 bps</div><div class="t" style="left:628px;top:511px;width:48.2px;text-align:right;line-height:15px;letter-spacing:-0.2px">0</div><div class="t" style="left:678px;top:511px;width:48.2px;text-align:right;line-height:15px;letter-spacing:-0.2px">0</div><div class="t" style="left:728px;top:511px;width:48.2px;text-align:right;line-height:15px;letter-spacing:-0.2px">0</div><div class="t" style="left:778px;top:511px;width:48.2px;text-align:right;line-height:15px;letter-spacing:-0.2px">0</div><div class="t" style="left:828px;top:511px;width:48.2px;text-align:right;line-height:15px;letter-spacing:-0.2px">1</div><div class="t" style="left:878px;top:511px;width:48.2px;text-align:right;line-height:15px;letter-spacing:-0.2px">0</div><div class="t" style="left:435px;top:526px;width:101.2px;text-align:right;line-height:15px;letter-spacing:-0.2px">320 bps</div><div class="t" style="left:538px;top:526px;width:88.2px;text-align:right;line-height:15px;letter-spacing:-0.2px">384 bps</div><div class="t" style="left:628px;top:526px;width:48.2px;text-align:right;line-height:15px;letter-spacing:-0.2px">1</div><div class="t" style="left:678px;top:526px;width:48.2px;text-align:right;line-height:15px;letter-spacing:-0.2px">1</div><div class="t" style="left:728px;top:526px;width:48.2px;text-align:right;line-height:15px;letter-spacing:-0.2px">0</div><div class="t" style="left:778px;top:526px;width:48.2px;text-align:right;line-height:15px;letter-spacing:-0.2px">0</div><div class="t" style="left:828px;top:526px;width:48.2px;text-align:right;line-height:15px;letter-spacing:-0.2px">0</div><div class="t" style="left:878px;top:526px;width:48.2px;text-align:right;line-height:15px;letter-spacing:-0.2px">0</div><div class="t" style="left:435px;top:541px;width:101.2px;text-align:right;line-height:15px;letter-spacing:-0.2px">384 bps</div><div class="t" style="left:538px;top:541px;width:88.2px;text-align:right;line-height:15px;letter-spacing:-0.2px">7.4 kbps</div><div class="t" style="left:628px;top:541px;width:48.2px;text-align:right;line-height:15px;letter-spacing:-0.2px">1</div><div class="t" style="left:678px;top:541px;width:48.2px;text-align:right;line-height:15px;letter-spacing:-0.2px">3</div><div class="t" style="left:728px;top:541px;width:48.2px;text-align:right;line-height:15px;letter-spacing:-0.2px">0</div><div class="t" style="left:778px;top:541px;width:48.2px;text-align:right;line-height:15px;letter-spacing:-0.2px">0</div><div class="t" style="left:828px;top:541px;width:48.2px;text-align:right;line-height:15px;letter-spacing:-0.2px">0</div><div class="t" style="left:878px;top:541px;width:48.2px;text-align:right;line-height:15px;letter-spacing:-0.2px">0</div><div class="t" style="left:435px;top:556px;width:101.2px;text-align:right;line-height:15px;letter-spacing:-0.2px">1039.8 kbps</div><div class="t" style="left:538px;top:556px;width:88.2px;text-align:right;line-height:15px;letter-spacing:-0.2px">20.2 kbps</div><div class="t" style="left:628px;top:556px;width:48.2px;text-align:right;line-height:15px;letter-spacing:-0.2px">90</div><div class="t" style="left:678px;top:556px;width:48.2px;text-align:right;line-height:15px;letter-spacing:-0.2px">58</div><div class="t" style="left:728px;top:556px;width:48.2px;text-align:right;line-height:15px;letter-spacing:-0.2px">0</div><div class="t" style="left:778px;top:556px;width:48.2px;text-align:right;line-height:15px;letter-spacing:-0.2px">0</div><div class="t" style="left:828px;top:556px;width:48.2px;text-align:right;line-height:15px;letter-spacing:-0.2px">0</div><div class="t" style="left:878px;top:556px;width:48.2px;text-align:right;line-height:15px;letter-spacing:-0.2px">6</div><div class="t" style="left:435px;top:571px;width:101.2px;text-align:right;line-height:15px;letter-spacing:-0.2px">0 bps</div><div class="t" style="left:538px;top:571px;width:88.2px;text-align:right;line-height:15px;letter-spacing:-0.2px">0 bps</div><div class="t" style="left:628px;top:571px;width:48.2px;text-align:right;line-height:15px;letter-spacing:-0.2px">0</div><div class="t" style="left:678px;top:571px;width:48.2px;text-align:right;line-height:15px;letter-spacing:-0.2px">0</div><div class="t" style="left:728px;top:571px;width:48.2px;text-align:right;line-height:15px;letter-spacing:-0.2px">0</div><div class="t" style="left:778px;top:571px;width:48.2px;text-align:right;line-height:15px;letter-spacing:-0.2px">0</div><div class="t" style="left:828px;top:571px;width:48.2px;text-align:right;line-height:15px;letter-spacing:-0.2px">1</div><div class="t" style="left:878px;top:571px;width:48.2px;text-align:right;line-height:15px;letter-spacing:-0.2px">0</div><div class="t" style="left:435px;top:586px;width:101.2px;text-align:right;line-height:15px;letter-spacing:-0.2px">0 bps</div><div class="t" style="left:538px;top:586px;width:88.2px;text-align:right;line-height:15px;letter-spacing:-0.2px">0 bps</div><div class="t" style="left:628px;top:586px;width:48.2px;text-align:right;line-height:15px;letter-spacing:-0.2px">0</div><div class="t" style="left:678px;top:586px;width:48.2px;text-align:right;line-height:15px;letter-spacing:-0.2px">0</div><div class="t" style="left:728px;top:586px;width:48.2px;text-align:right;line-height:15px;letter-spacing:-0.2px">0</div><div class="t" style="left:778px;top:586px;width:48.2px;text-align:right;line-height:15px;letter-spacing:-0.2px">0</div><div class="t" style="left:828px;top:586px;width:48.2px;text-align:right;line-height:15px;letter-spacing:-0.2px">0</div><div class="t" style="left:878px;top:586px;width:48.2px;text-align:right;line-height:15px;letter-spacing:-0.2px">1</div><div class="t" style="left:435px;top:601px;width:101.2px;text-align:right;line-height:15px;letter-spacing:-0.2px">630.9 kbps</div><div class="t" style="left:538px;top:601px;width:88.2px;text-align:right;line-height:15px;letter-spacing:-0.2px">12.7 kbps</div><div class="t" style="left:628px;top:601px;width:48.2px;text-align:right;line-height:15px;letter-spacing:-0.2px">55</div><div class="t" style="left:678px;top:601px;width:48.2px;text-align:right;line-height:15px;letter-spacing:-0.2px">36</div><div class="t" style="left:728px;top:601px;width:48.2px;text-align:right;line-height:15px;letter-spacing:-0.2px">0</div><div class="t" style="left:778px;top:601px;width:48.2px;text-align:right;line-height:15px;letter-spacing:-0.2px">0</div><div class="t" style="left:828px;top:601px;width:48.2px;text-align:right;line-height:15px;letter-spacing:-0.2px">0</div><div class="t" style="left:878px;top:601px;width:48.2px;text-align:right;line-height:15px;letter-spacing:-0.2px">245</div><div class="t" style="left:435px;top:616px;width:101.2px;text-align:right;line-height:15px;letter-spacing:-0.2px">38.2 kbps</div><div class="t" style="left:538px;top:616px;width:88.2px;text-align:right;line-height:15px;letter-spacing:-0.2px">27.9 kbps</div><div class="t" style="left:628px;top:616px;width:48.2px;text-align:right;line-height:15px;letter-spacing:-0.2px">11</div><div class="t" style="left:678px;top:616px;width:48.2px;text-align:right;line-height:15px;letter-spacing:-0.2px">20</div><div class="t" style="left:728px;top:616px;width:48.2px;text-align:right;line-height:15px;letter-spacing:-0.2px">0</div><div class="t" style="left:778px;top:616px;width:48.2px;text-align:right;line-height:15px;letter-spacing:-0.2px">0</div><div class="t" style="left:828px;top:616px;width:48.2px;text-align:right;line-height:15px;letter-spacing:-0.2px">0</div><div class="t" style="left:878px;top:616px;width:48.2px;text-align:right;line-height:15px;letter-spacing:-0.2px">0</div><div class="t" style="left:435px;top:631px;width:101.2px;text-align:right;line-height:15px;letter-spacing:-0.2px">0 bps</div><div class="t" style="left:538px;top:631px;width:88.2px;text-align:right;line-height:15px;letter-spacing:-0.2px">0 bps</div><div class="t" style="left:628px;top:631px;width:48.2px;text-align:right;line-height:15px;letter-spacing:-0.2px">0</div><div class="t" style="left:678px;top:631px;width:48.2px;text-align:right;line-height:15px;letter-spacing:-0.2px">0</div><div class="t" style="left:728px;top:631px;width:48.2px;text-align:right;line-height:15px;letter-spacing:-0.2px">0</div><div class="t" style="left:778px;top:631px;width:48.2px;text-align:right;line-height:15px;letter-spacing:-0.2px">0</div><div class="t" style="left:828px;top:631px;width:48.2px;text-align:right;line-height:15px;letter-spacing:-0.2px">1</div><div class="t" style="left:878px;top:631px;width:48.2px;text-align:right;line-height:15px;letter-spacing:-0.2px">0</div><div class="t" style="left:435px;top:646px;width:101.2px;text-align:right;line-height:15px;letter-spacing:-0.2px">3.0 Mbps</div><div class="t" style="left:538px;top:646px;width:88.2px;text-align:right;line-height:15px;letter-spacing:-0.2px">117.9 kbps</div><div class="t" style="left:628px;top:646px;width:48.2px;text-align:right;line-height:15px;letter-spacing:-0.2px">322</div><div class="t" style="left:678px;top:646px;width:48.2px;text-align:right;line-height:15px;letter-spacing:-0.2px">279</div><div class="t" style="left:728px;top:646px;width:48.2px;text-align:right;line-height:15px;letter-spacing:-0.2px">0</div><div class="t" style="left:778px;top:646px;width:48.2px;text-align:right;line-height:15px;letter-spacing:-0.2px">0</div><div class="t" style="left:828px;top:646px;width:48.2px;text-align:right;line-height:15px;letter-spacing:-0.2px">2</div><div class="t" style="left:878px;top:646px;width:48.2px;text-align:right;line-height:15px;letter-spacing:-0.2px">281</div><div class="t" style="left:435px;top:661px;width:101.2px;text-align:right;line-height:15px;letter-spacing:-0.2px">19.7 kbps</div><div class="t" style="left:538px;top:661px;width:88.2px;text-align:right;line-height:15px;letter-spacing:-0.2px">14.0 kbps</div><div class="t" style="left:628px;top:661px;width:48.2px;text-align:right;line-height:15px;letter-spacing:-0.2px">20</div><div class="t" style="left:678px;top:661px;width:48.2px;text-align:right;line-height:15px;letter-spacing:-0.2px">27</div><div class="t" style="left:728px;top:661px;width:48.2px;text-align:right;line-height:15px;letter-spacing:-0.2px">0</div><div class="t" style="left:778px;top:661px;width:48.2px;text-align:right;line-height:15px;letter-spacing:-0.2px">0</div><div class="t" style="left:828px;top:661px;width:48.2px;text-align:right;line-height:15px;letter-spacing:-0.2px">1</div><div class="t" style="left:878px;top:661px;width:48.2px;text-align:right;line-height:15px;letter-spacing:-0.2px">0</div><div class="t" style="left:435px;top:676px;width:101.2px;text-align:right;line-height:15px;letter-spacing:-0.2px">0 bps</div><div class="t" style="left:538px;top:676px;width:88.2px;text-align:right;line-height:15px;letter-spacing:-0.2px">0 bps</div><div class="t" style="left:628px;top:676px;width:48.2px;text-align:right;line-height:15px;letter-spacing:-0.2px">0</div><div class="t" style="left:678px;top:676px;width:48.2px;text-align:right;line-height:15px;letter-spacing:-0.2px">0</div><div class="t" style="left:728px;top:676px;width:48.2px;text-align:right;line-height:15px;letter-spacing:-0.2px">0</div><div class="t" style="left:778px;top:676px;width:48.2px;text-align:right;line-height:15px;letter-spacing:-0.2px">0</div><div class="t" style="left:828px;top:676px;width:48.2px;text-align:right;line-height:15px;letter-spacing:-0.2px">0</div><div class="t" style="left:878px;top:676px;width:48.2px;text-align:right;line-height:15px;letter-spacing:-0.2px">1</div><div class="t" style="left:435px;top:691px;width:101.2px;text-align:right;line-height:15px;letter-spacing:-0.2px">704 bps</div><div class="t" style="left:538px;top:691px;width:88.2px;text-align:right;line-height:15px;letter-spacing:-0.2px">9.0 kbps</div><div class="t" style="left:628px;top:691px;width:48.2px;text-align:right;line-height:15px;letter-spacing:-0.2px">2</div><div class="t" style="left:678px;top:691px;width:48.2px;text-align:right;line-height:15px;letter-spacing:-0.2px">3</div><div class="t" style="left:728px;top:691px;width:48.2px;text-align:right;line-height:15px;letter-spacing:-0.2px">0</div><div class="t" style="left:778px;top:691px;width:48.2px;text-align:right;line-height:15px;letter-spacing:-0.2px">0</div><div class="t" style="left:828px;top:691px;width:48.2px;text-align:right;line-height:15px;letter-spacing:-0.2px">0</div><div class="t" style="left:878px;top:691px;width:48.2px;text-align:right;line-height:15px;letter-spacing:-0.2px">0</div><div class="t" style="left:435px;top:706px;width:101.2px;text-align:right;line-height:15px;letter-spacing:-0.2px">0 bps</div><div class="t" style="left:538px;top:706px;width:88.2px;text-align:right;line-height:15px;letter-spacing:-0.2px">0 bps</div><div class="t" style="left:628px;top:706px;width:48.2px;text-align:right;line-height:15px;letter-spacing:-0.2px">0</div><div class="t" style="left:678px;top:706px;width:48.2px;text-align:right;line-height:15px;letter-spacing:-0.2px">0</div><div class="t" style="left:728px;top:706px;width:48.2px;text-align:right;line-height:15px;letter-spacing:-0.2px">0</div><div class="t" style="left:778px;top:706px;width:48.2px;text-align:right;line-height:15px;letter-spacing:-0.2px">0</div><div class="t" style="left:828px;top:706px;width:48.2px;text-align:right;line-height:15px;letter-spacing:-0.2px">0</div><div class="t" style="left:878px;top:706px;width:48.2px;text-align:right;line-height:15px;letter-spacing:-0.2px">0</div><div class="t" style="left:435px;top:721px;width:101.2px;text-align:right;line-height:15px;letter-spacing:-0.2px">69.9 kbps</div><div class="t" style="left:538px;top:721px;width:88.2px;text-align:right;line-height:15px;letter-spacing:-0.2px">8.5 kbps</div><div class="t" style="left:628px;top:721px;width:48.2px;text-align:right;line-height:15px;letter-spacing:-0.2px">8</div><div class="t" style="left:678px;top:721px;width:48.2px;text-align:right;line-height:15px;letter-spacing:-0.2px">10</div><div class="t" style="left:728px;top:721px;width:48.2px;text-align:right;line-height:15px;letter-spacing:-0.2px">0</div><div class="t" style="left:778px;top:721px;width:48.2px;text-align:right;line-height:15px;letter-spacing:-0.2px">0</div><div class="t" style="left:828px;top:721px;width:48.2px;text-align:right;line-height:15px;letter-spacing:-0.2px">1</div><div class="t" style="left:878px;top:721px;width:48.2px;text-align:right;line-height:15px;letter-spacing:-0.2px">164</div><div class="t" style="left:435px;top:736px;width:101.2px;text-align:right;line-height:15px;letter-spacing:-0.2px">0 bps</div><div class="t" style="left:538px;top:736px;width:88.2px;text-align:right;line-height:15px;letter-spacing:-0.2px">0 bps</div><div class="t" style="left:628px;top:736px;width:48.2px;text-align:right;line-height:15px;letter-spacing:-0.2px">0</div><div class="t" style="left:678px;top:736px;width:48.2px;text-align:right;line-height:15px;letter-spacing:-0.2px">0</div><div class="t" style="left:728px;top:736px;width:48.2px;text-align:right;line-height:15px;letter-spacing:-0.2px">0</div><div class="t" style="left:778px;top:736px;width:48.2px;text-align:right;line-height:15px;letter-spacing:-0.2px">0</div><div class="t" style="left:828px;top:736px;width:48.2px;text-align:right;line-height:15px;letter-spacing:-0.2px">0</div><div class="t" style="left:878px;top:736px;width:48.2px;text-align:right;line-height:15px;letter-spacing:-0.2px">0</div><div class="t" style="left:435px;top:751px;width:101.2px;text-align:right;line-height:15px;letter-spacing:-0.2px">320 bps</div><div class="t" style="left:538px;top:751px;width:88.2px;text-align:right;line-height:15px;letter-spacing:-0.2px">640 bps</div><div class="t" style="left:628px;top:751px;width:48.2px;text-align:right;line-height:15px;letter-spacing:-0.2px">1</div><div class="t" style="left:678px;top:751px;width:48.2px;text-align:right;line-height:15px;letter-spacing:-0.2px">2</div><div class="t" style="left:728px;top:751px;width:48.2px;text-align:right;line-height:15px;letter-spacing:-0.2px">0</div><div class="t" style="left:778px;top:751px;width:48.2px;text-align:right;line-height:15px;letter-spacing:-0.2px">0</div><div class="t" style="left:828px;top:751px;width:48.2px;text-align:right;line-height:15px;letter-spacing:-0.2px">0</div><div class="t" style="left:878px;top:751px;width:48.2px;text-align:right;line-height:15px;letter-spacing:-0.2px">0</div><div class="t" style="left:435px;top:766px;width:101.2px;text-align:right;line-height:15px;letter-spacing:-0.2px">3.5 kbps</div><div class="t" style="left:538px;top:766px;width:88.2px;text-align:right;line-height:15px;letter-spacing:-0.2px">8.9 kbps</div><div class="t" style="left:628px;top:766px;width:48.2px;text-align:right;line-height:15px;letter-spacing:-0.2px">2</div><div class="t" style="left:678px;top:766px;width:48.2px;text-align:right;line-height:15px;letter-spacing:-0.2px">1</div><div class="t" style="left:728px;top:766px;width:48.2px;text-align:right;line-height:15px;letter-spacing:-0.2px">0</div><div class="t" style="left:778px;top:766px;width:48.2px;text-align:right;line-height:15px;letter-spacing:-0.2px">0</div><div class="t" style="left:828px;top:766px;width:48.2px;text-align:right;line-height:15px;letter-spacing:-0.2px">1</div><div class="t" style="left:878px;top:766px;width:48.2px;text-align:right;line-height:15px;letter-spacing:-0.2px">0</div><div class="t" style="left:435px;top:781px;width:101.2px;text-align:right;line-height:15px;letter-spacing:-0.2px">2.7 kbps</div><div class="t" style="left:538px;top:781px;width:88.2px;text-align:right;line-height:15px;letter-spacing:-0.2px">2.4 kbps</div><div class="t" style="left:628px;top:781px;width:48.2px;text-align:right;line-height:15px;letter-spacing:-0.2px">1</div><div class="t" style="left:678px;top:781px;width:48.2px;text-align:right;line-height:15px;letter-spacing:-0.2px">3</div><div class="t" style="left:728px;top:781px;width:48.2px;text-align:right;line-height:15px;letter-spacing:-0.2px">0</div><div class="t" style="left:778px;top:781px;width:48.2px;text-align:right;line-height:15px;letter-spacing:-0.2px">0</div><div class="t" style="left:828px;top:781px;width:48.2px;text-align:right;line-height:15px;letter-spacing:-0.2px">0</div><div class="t" style="left:878px;top:781px;width:48.2px;text-align:right;line-height:15px;letter-spacing:-0.2px">0</div><div class="t" style="left:435px;top:796px;width:101.2px;text-align:right;line-height:15px;letter-spacing:-0.2px">1027.1 kbps</div><div class="t" style="left:538px;top:796px;width:88.2px;text-align:right;line-height:15px;letter-spacing:-0.2px">32.0 kbps</div><div class="t" style="left:628px;top:796px;width:48.2px;text-align:right;line-height:15px;letter-spacing:-0.2px">99</div><div class="t" style="left:678px;top:796px;width:48.2px;text-align:right;line-height:15px;letter-spacing:-0.2px">77</div><div class="t" style="left:728px;top:796px;width:48.2px;text-align:right;line-height:15px;letter-spacing:-0.2px">0</div><div class="t" style="left:778px;top:796px;width:48.2px;text-align:right;line-height:15px;letter-spacing:-0.2px">0</div><div class="t" style="left:828px;top:796px;width:48.2px;text-align:right;line-height:15px;letter-spacing:-0.2px">0</div><div class="t" style="left:878px;top:796px;width:48.2px;text-align:right;line-height:15px;letter-spacing:-0.2px">42</div><div class="t" style="left:435px;top:811px;width:101.2px;text-align:right;line-height:15px;letter-spacing:-0.2px">0 bps</div><div class="t" style="left:538px;top:811px;width:88.2px;text-align:right;line-height:15px;letter-spacing:-0.2px">1283 bps</div><div class="t" style="left:628px;top:811px;width:48.2px;text-align:right;line-height:15px;letter-spacing:-0.2px">0</div><div class="t" style="left:678px;top:811px;width:48.2px;text-align:right;line-height:15px;letter-spacing:-0.2px">1</div><div class="t" style="left:728px;top:811px;width:48.2px;text-align:right;line-height:15px;letter-spacing:-0.2px">0</div><div class="t" style="left:778px;top:811px;width:48.2px;text-align:right;line-height:15px;letter-spacing:-0.2px">0</div><div class="t" style="left:828px;top:811px;width:48.2px;text-align:right;line-height:15px;letter-spacing:-0.2px">0</div><div class="t" style="left:878px;top:811px;width:48.2px;text-align:right;line-height:15px;letter-spacing:-0.2px">0</div><div class="t" style="left:435px;top:826px;width:101.2px;text-align:right;line-height:15px;letter-spacing:-0.2px">0 bps</div><div class="t" style="left:538px;top:826px;width:88.2px;text-align:right;line-height:15px;letter-spacing:-0.2px">0 bps</div><div class="t" style="left:628px;top:826px;width:48.2px;text-align:right;line-height:15px;letter-spacing:-0.2px">0</div><div class="t" style="left:678px;top:826px;width:48.2px;text-align:right;line-height:15px;letter-spacing:-0.2px">0</div><div class="t" style="left:728px;top:826px;width:48.2px;text-align:right;line-height:15px;letter-spacing:-0.2px">0</div><div class="t" style="left:778px;top:826px;width:48.2px;text-align:right;line-height:15px;letter-spacing:-0.2px">0</div><div class="t" style="left:828px;top:826px;width:48.2px;text-align:right;line-height:15px;letter-spacing:-0.2px">0</div><div class="t" style="left:878px;top:826px;width:48.2px;text-align:right;line-height:15px;letter-spacing:-0.2px">97</div><div class="t" style="left:435px;top:841px;width:101.2px;text-align:right;line-height:15px;letter-spacing:-0.2px">0 bps</div><div class="t" style="left:538px;top:841px;width:88.2px;text-align:right;line-height:15px;letter-spacing:-0.2px">0 bps</div><div class="t" style="left:628px;top:841px;width:48.2px;text-align:right;line-height:15px;letter-spacing:-0.2px">0</div><div class="t" style="left:678px;top:841px;width:48.2px;text-align:right;line-height:15px;letter-spacing:-0.2px">0</div><div class="t" style="left:728px;top:841px;width:48.2px;text-align:right;line-height:15px;letter-spacing:-0.2px">0</div><div class="t" style="left:778px;top:841px;width:48.2px;text-align:right;line-height:15px;letter-spacing:-0.2px">0</div><div class="t" style="left:828px;top:841px;width:48.2px;text-align:right;line-height:15px;letter-spacing:-0.2px">0</div><div class="t" style="left:878px;top:841px;width:48.2px;text-align:right;line-height:15px;letter-spacing:-0.2px">218</div><div class="t" style="left:3px;top:46px;text-align:left;line-height:15px">DR</div><div class="t" style="left:40px;top:46px;text-align:left;line-height:15px">&lt;pppoe-user1&gt; ALLNet Ind. J. (link)</div><div class="t" style="left:269px;top:46px;text-align:left;line-height:15px">PPPoE Server</div><div class="t" style="left:3px;top:841px;text-align:left;line-height:15px">DR</div><div class="t" style="left:24px;top:841px;text-align:left;line-height:15px">&lt;pppoe-aal-tetyana.k&gt; Ivan Kyrylo</div><div class="t" style="left:269px;top:841px;text-align:left;line-height:15px">PPPoE Server</div><div style="left:0px;top:850px;width:935px;height:1px;background:#5a5a5a"></div><div style="left:3px;top:50px;width:446px;height:799px;background:#d6d6ce;border:0;outline:1px solid #000;outline-offset:-1px"></div><div style="left:4px;top:51px;width:444px;height:22px;background:#4848d0"></div><div style="left:4px;top:73px;width:444px;height:1px;background:#e6e4f0"></div><div class="t" style="left:9px;top:53px;text-align:left;line-height:22px;color:#fff;letter-spacing:-0.2px">Interface &lt;LAN1&gt;</div><div style="left:413px;top:55px;width:14px;height:14px;background:#e8e6e0;outline:1px solid #20205a;outline-offset:-1px"></div><div style="left:430px;top:55px;width:14px;height:14px;background:#e8e6e0;outline:1px solid #20205a;outline-offset:-1px"></div><div style="left:415px;top:58px;width:9px;height:9px;border:1px solid #111;border-top-width:2px;box-sizing:border-box"></div><svg style="position:absolute;left:433px;top:58px" width="8" height="8" viewBox="0 0 8 8"><path d="M0.8 0.8 L7.2 7.2 M7.2 0.8 L0.8 7.2" stroke="#111" stroke-width="1.7"/></svg><div style="left:9px;top:78px;width:41px;height:19px;background:#c3c0b9"></div><div class="t" style="left:9px;top:79px;width:41px;text-align:left;line-height:19px;text-align:center;letter-spacing:-0.2px">Status</div><div style="left:51px;top:78px;width:71px;height:19px;background:#c3c0b9"></div><div class="t" style="left:51px;top:79px;width:71px;text-align:left;line-height:19px;text-align:center;letter-spacing:-0.2px">Overall Stats</div><div style="left:123px;top:78px;width:51px;height:19px;background:#c3c0b9"></div><div class="t" style="left:123px;top:79px;width:51px;text-align:left;line-height:19px;text-align:center;letter-spacing:-0.2px">Rx Stats</div><div style="left:175px;top:78px;width:48px;height:19px;background:#c3c0b9"></div><div class="t" style="left:175px;top:79px;width:48px;text-align:left;line-height:19px;text-align:center;letter-spacing:-0.2px">Tx Stats</div><div style="left:50px;top:78px;width:1px;height:19px;background:#ecebe6"></div><div style="left:122px;top:78px;width:1px;height:19px;background:#ecebe6"></div><div style="left:174px;top:78px;width:1px;height:19px;background:#ecebe6"></div><div style="left:269px;top:78px;width:19px;height:19px;background:#c3c0b9"></div><div class="t" style="left:268.3px;top:79px;width:19px;text-align:left;line-height:19px;text-align:center">...</div><div style="left:5px;top:97px;width:312px;height:726px;background:#d6d6ce;border-top:1px solid #fff;border-left:1px solid #fff;border-right:1px solid #808080;border-bottom:1px solid #808080;box-sizing:border-box"></div><div style="left:223px;top:75px;width:46px;height:23px;background:#d6d6ce;border-top:1px solid #fff;border-left:1px solid #fff;border-right:1px solid #808080;box-sizing:border-box"></div><div class="t" style="left:224px;top:77px;width:45px;text-align:left;line-height:19px;text-align:center">Traffic</div><div class="t" style="left:10px;top:106px;width:99.6px;text-align:right;line-height:18px">Tx/Rx Rate:</div><div style="left:116px;top:105px;width:91px;height:18px;border:1px solid #808080;border-right-color:#fff;border-bottom-color:#fff;box-sizing:border-box"></div><div class="t" style="left:120px;top:106px;text-align:left;line-height:18px">20.5 Mbps</div><div class="t" style="left:210px;top:106px;text-align:left;line-height:18px">/</div><div style="left:217px;top:105px;width:91px;height:18px;border:1px solid #808080;border-right-color:#fff;border-bottom-color:#fff;box-sizing:border-box"></div><div class="t" style="left:221px;top:106px;text-align:left;line-height:18px">7.5 Mbps</div><div class="t" style="left:10px;top:131px;width:99.6px;text-align:right;line-height:18px">Tx/Rx Packet Rate:</div><div style="left:116px;top:130px;width:91px;height:18px;border:1px solid #808080;border-right-color:#fff;border-bottom-color:#fff;box-sizing:border-box"></div><div class="t" style="left:120px;top:131px;text-align:left;line-height:18px">2 569 p/s</div><div class="t" style="left:210px;top:131px;text-align:left;line-height:18px">/</div><div style="left:217px;top:130px;width:91px;height:18px;border:1px solid #808080;border-right-color:#fff;border-bottom-color:#fff;box-sizing:border-box"></div><div class="t" style="left:221px;top:131px;text-align:left;line-height:18px">2 338 p/s</div><div class="t" style="left:10px;top:156px;width:99.6px;text-align:right;line-height:18px">Tx/Rx Bytes:</div><div style="left:116px;top:155px;width:91px;height:18px;border:1px solid #808080;border-right-color:#fff;border-bottom-color:#fff;box-sizing:border-box"></div><div class="t" style="left:120px;top:156px;text-align:left;line-height:18px">1872.9 GiB</div><div class="t" style="left:210px;top:156px;text-align:left;line-height:18px">/</div><div style="left:217px;top:155px;width:91px;height:18px;border:1px solid #808080;border-right-color:#fff;border-bottom-color:#fff;box-sizing:border-box"></div><div class="t" style="left:221px;top:156px;text-align:left;line-height:18px">471.8 GiB</div><div class="t" style="left:10px;top:181px;width:99.6px;text-align:right;line-height:18px">Tx/Rx Packets:</div><div style="left:116px;top:180px;width:91px;height:18px;border:1px solid #808080;border-right-color:#fff;border-bottom-color:#fff;box-sizing:border-box"></div><div class="t" style="left:120px;top:181px;text-align:left;line-height:18px">1832 113 808</div><div class="t" style="left:210px;top:181px;text-align:left;line-height:18px">/</div><div style="left:217px;top:180px;width:91px;height:18px;border:1px solid #808080;border-right-color:#fff;border-bottom-color:#fff;box-sizing:border-box"></div><div class="t" style="left:221px;top:181px;text-align:left;line-height:18px">1539 149 330</div><div class="t" style="left:10px;top:206px;width:99.6px;text-align:right;line-height:18px">Tx/Rx Drops:</div><div style="left:116px;top:205px;width:91px;height:18px;border:1px solid #808080;border-right-color:#fff;border-bottom-color:#fff;box-sizing:border-box"></div><div class="t" style="left:120px;top:206px;text-align:left;line-height:18px">0</div><div class="t" style="left:210px;top:206px;text-align:left;line-height:18px">/</div><div style="left:217px;top:205px;width:91px;height:18px;border:1px solid #808080;border-right-color:#fff;border-bottom-color:#fff;box-sizing:border-box"></div><div class="t" style="left:221px;top:206px;text-align:left;line-height:18px">0</div><div class="t" style="left:10px;top:231px;width:99.6px;text-align:right;line-height:18px;letter-spacing:-0.2px">Tx/Rx Errors:</div><div style="left:116px;top:230px;width:91px;height:18px;border:1px solid #808080;border-right-color:#fff;border-bottom-color:#fff;box-sizing:border-box"></div><div class="t" style="left:120px;top:231px;text-align:left;line-height:18px">0</div><div class="t" style="left:210px;top:231px;text-align:left;line-height:18px">/</div><div style="left:217px;top:230px;width:91px;height:18px;border:1px solid #808080;border-right-color:#fff;border-bottom-color:#fff;box-sizing:border-box"></div><div class="t" style="left:221px;top:231px;text-align:left;line-height:18px">0</div><div style="left:327px;top:78px;width:114px;height:23px;background:#d6d6ce;border:1px solid #000;box-sizing:border-box"></div><div style="left:328px;top:79px;width:112px;height:21px;border-top:1px solid #fff;border-left:1px solid #fff;box-sizing:border-box"></div><div style="left:329px;top:80px;width:110px;height:19px;border:1px dotted #000;box-sizing:border-box"></div><div style="left:327px;top:101px;width:114px;height:1px;background:#f4f2ee"></div><div class="t" style="left:327px;top:79px;width:114px;text-align:left;line-height:23px;text-align:center;letter-spacing:-0.25px">OK</div><div style="left:327px;top:104px;width:114px;height:23px;background:#d6d6ce;border:1px solid #6a6a6a;box-sizing:border-box"></div><div style="left:328px;top:105px;width:112px;height:21px;border-top:1px solid #fff;border-left:1px solid #fff;box-sizing:border-box"></div><div style="left:327px;top:127px;width:114px;height:1px;background:#f4f2ee"></div><div class="t" style="left:327px;top:105px;width:114px;text-align:left;line-height:23px;text-align:center;letter-spacing:-0.25px">Cancel</div><div style="left:327px;top:130px;width:114px;height:23px;background:#d6d6ce;border:1px solid #6a6a6a;box-sizing:border-box"></div><div style="left:328px;top:131px;width:112px;height:21px;border-top:1px solid #fff;border-left:1px solid #fff;box-sizing:border-box"></div><div style="left:327px;top:153px;width:114px;height:1px;background:#f4f2ee"></div><div class="t" style="left:327px;top:131px;width:114px;text-align:left;line-height:23px;text-align:center;letter-spacing:-0.25px">Apply</div><div style="left:327px;top:162px;width:114px;height:23px;background:#d6d6ce;border:1px solid #6a6a6a;box-sizing:border-box"></div><div style="left:328px;top:163px;width:112px;height:21px;border-top:1px solid #fff;border-left:1px solid #fff;box-sizing:border-box"></div><div style="left:327px;top:185px;width:114px;height:1px;background:#f4f2ee"></div><div class="t" style="left:327px;top:163px;width:114px;text-align:left;line-height:23px;text-align:center;letter-spacing:-0.25px">Disable</div><div style="left:327px;top:188px;width:114px;height:23px;background:#d6d6ce;border:1px solid #6a6a6a;box-sizing:border-box"></div><div style="left:328px;top:189px;width:112px;height:21px;border-top:1px solid #fff;border-left:1px solid #fff;box-sizing:border-box"></div><div style="left:327px;top:211px;width:114px;height:1px;background:#f4f2ee"></div><div class="t" style="left:327px;top:189px;width:114px;text-align:left;line-height:23px;text-align:center;letter-spacing:-0.25px">Comment</div><div style="left:327px;top:220px;width:114px;height:23px;background:#d6d6ce;border:1px solid #6a6a6a;box-sizing:border-box"></div><div style="left:328px;top:221px;width:112px;height:21px;border-top:1px solid #fff;border-left:1px solid #fff;box-sizing:border-box"></div><div style="left:327px;top:243px;width:114px;height:1px;background:#f4f2ee"></div><div class="t" style="left:327px;top:221px;width:114px;text-align:left;line-height:23px;text-align:center;letter-spacing:-0.25px">Torch</div><div style="left:327px;top:252px;width:114px;height:23px;background:#d6d6ce;border:1px solid #6a6a6a;box-sizing:border-box"></div><div style="left:328px;top:253px;width:112px;height:21px;border-top:1px solid #fff;border-left:1px solid #fff;box-sizing:border-box"></div><div style="left:327px;top:275px;width:114px;height:1px;background:#f4f2ee"></div><div class="t" style="left:327px;top:253px;width:114px;text-align:left;line-height:23px;text-align:center;letter-spacing:-0.25px">Blink</div><div style="left:327px;top:278px;width:114px;height:23px;background:#d6d6ce;border:1px solid #6a6a6a;box-sizing:border-box"></div><div style="left:328px;top:279px;width:112px;height:21px;border-top:1px solid #fff;border-left:1px solid #fff;box-sizing:border-box"></div><div style="left:327px;top:301px;width:114px;height:1px;background:#f4f2ee"></div><div class="t" style="left:327px;top:279px;width:114px;text-align:left;line-height:23px;text-align:center;letter-spacing:-0.25px">Reset MAC Address</div><div style="left:327px;top:304px;width:114px;height:23px;background:#d6d6ce;border:1px solid #6a6a6a;box-sizing:border-box"></div><div style="left:328px;top:305px;width:112px;height:21px;border-top:1px solid #fff;border-left:1px solid #fff;box-sizing:border-box"></div><div style="left:327px;top:327px;width:114px;height:1px;background:#f4f2ee"></div><div class="t" style="left:327px;top:305px;width:114px;text-align:left;line-height:23px;text-align:center;letter-spacing:-0.25px">Reset Counters</div><div style="left:15px;top:256px;width:294px;height:276px;background:#fff;border-top:1px solid #404040;border-left:1px solid #404040;border-right:1px solid #fff;border-bottom:1px solid #fff;box-sizing:border-box"></div><svg style="position:absolute;left:16px;top:257px" width="292" height="274" shape-rendering="crispEdges"><path d="M15.5 0V274 M30.5 0V274 M45.5 0V274 M60.5 0V274 M75.5 0V274 M90.5 0V274 M105.5 0V274 M120.5 0V274 M135.5 0V274 M150.5 0V274 M165.5 0V274 M180.5 0V274 M195.5 0V274 M210.5 0V274 M225.5 0V274 M240.5 0V274 M255.5 0V274 M270.5 0V274 M285.5 0V274 M0 3.5H292 M0 18.5H292 M0 33.5H292 M0 48.5H292 M0 63.5H292 M0 78.5H292 M0 93.5H292 M0 108.5H292 M0 123.5H292 M0 138.5H292 M0 153.5H292 M0 168.5H292 M0 183.5H292 M0 198.5H292 M0 213.5H292 M0 228.5H292 M0 243.5H292 M0 258.5H292 M0 273.5H292" stroke="#d8d8d8" stroke-width="1" fill="none"/><path d="M112.5 73V273 M115.5 80V273 M118.5 90V273 M121.5 79V273 M124.5 73V273 M127.5 75V273 M130.5 85V273 M133.5 94V273 M136.5 92V273 M139.5 89V273 M142.5 97V273 M145.5 97V273 M151.5 95V273 M154.5 98V273 M160.5 117V273 M163.5 46V273 M166.5 92V273 M169.5 88V273 M172.5 93V273 M175.5 102V273 M178.5 91V273 M181.5 84V273 M187.5 84V273 M190.5 90V273 M193.5 91V273 M196.5 105V273 M199.5 95V273 M202.5 93V273 M205.5 95V273 M208.5 107V273 M211.5 99V273 M214.5 104V273 M217.5 98V273 M220.5 101V273 M223.5 105V273 M226.5 89V273 M229.5 93V273 M232.5 93V273 M235.5 87V273 M238.5 90V273 M241.5 93V273 M244.5 91V273 M247.5 95V273 M250.5 92V273 M253.5 102V273 M256.5 106V273 M259.5 106V273 M262.5 94V273 M265.5 83V273 M268.5 96V273 M271.5 114V273 M274.5 88V273 M277.5 104V273 M280.5 107V273 M283.5 113V273 M286.5 115V273 M289.5 107V273" stroke="#1c1c90" stroke-width="1" fill="none"/><path d="M112.5 219V273 M115.5 222V273 M118.5 210V273 M121.5 211V273 M124.5 207V273 M127.5 208V273 M130.5 216V273 M133.5 211V273 M136.5 216V273 M139.5 203V273 M142.5 212V273 M145.5 208V273 M151.5 214V273 M154.5 211V273 M160.5 222V273 M163.5 183V273 M166.5 202V273 M169.5 206V273 M172.5 208V273 M175.5 202V273 M178.5 211V273 M181.5 197V273 M187.5 210V273 M190.5 209V273 M193.5 207V273 M196.5 216V273 M199.5 213V273 M202.5 211V273 M205.5 214V273 M208.5 202V273 M211.5 210V273 M214.5 213V273 M217.5 224V273 M220.5 222V273 M223.5 216V273 M226.5 221V273 M229.5 214V273 M232.5 210V273 M235.5 211V273 M238.5 205V273 M241.5 206V273 M244.5 211V273 M247.5 209V273 M250.5 211V273 M253.5 204V273 M256.5 205V273 M259.5 218V273 M262.5 211V273 M265.5 208V273 M268.5 198V273 M271.5 214V273 M274.5 196V273 M277.5 196V273 M280.5 222V273 M283.5 220V273 M286.5 214V273 M289.5 212V273" stroke="#5a0c96" stroke-width="1" fill="none"/><path d="M113.5 219V273 M116.5 222V273 M119.5 210V273 M122.5 211V273 M125.5 207V273 M128.5 208V273 M131.5 216V273 M134.5 211V273 M137.5 216V273 M140.5 203V273 M143.5 212V273 M146.5 208V273 M152.5 214V273 M155.5 211V273 M161.5 222V273 M164.5 183V273 M167.5 202V273 M170.5 206V273 M173.5 208V273 M176.5 202V273 M179.5 211V273 M182.5 197V273 M188.5 210V273 M191.5 209V273 M194.5 207V273 M197.5 216V273 M200.5 213V273 M203.5 211V273 M206.5 214V273 M209.5 202V273 M212.5 210V273 M215.5 213V273 M218.5 224V273 M221.5 222V273 M224.5 216V273 M227.5 221V273 M230.5 214V273 M233.5 210V273 M236.5 211V273 M239.5 205V273 M242.5 206V273 M245.5 211V273 M248.5 209V273 M251.5 211V273 M254.5 204V273 M257.5 205V273 M260.5 218V273 M263.5 211V273 M266.5 208V273 M269.5 198V273 M272.5 214V273 M275.5 196V273 M278.5 196V273 M281.5 222V273 M284.5 220V273 M287.5 214V273 M290.5 212V273" stroke="#8c1464" stroke-width="1" fill="none"/></svg><div style="left:18px;top:489px;width:98px;height:38px;background:#fff;border:1px solid #000;box-sizing:border-box"></div><div style="left:21px;top:493px;width:14px;height:13px;background:#0000ff;border:1px solid #1a1a50;box-sizing:border-box"></div><div style="left:21px;top:509px;width:14px;height:13px;background:#ff0000;border:1px solid #501a1a;box-sizing:border-box"></div><div class="t" style="left:38px;top:491px;text-align:left;line-height:17px;white-space:pre;letter-spacing:-0.2px">Tx:  20.5 Mbps</div><div class="t" style="left:38px;top:507px;text-align:left;line-height:17px;white-space:pre;letter-spacing:-0.2px">Rx:  7.5 Mbps</div><div style="left:15px;top:539px;width:294px;height:276px;background:#fff;border-top:1px solid #404040;border-left:1px solid #404040;border-right:1px solid #fff;border-bottom:1px solid #fff;box-sizing:border-box"></div><svg style="position:absolute;left:16px;top:540px" width="292" height="274" shape-rendering="crispEdges"><path d="M15.5 0V274 M30.5 0V274 M45.5 0V274 M60.5 0V274 M75.5 0V274 M90.5 0V274 M105.5 0V274 M120.5 0V274 M135.5 0V274 M150.5 0V274 M165.5 0V274 M180.5 0V274 M195.5 0V274 M210.5 0V274 M225.5 0V274 M240.5 0V274 M255.5 0V274 M270.5 0V274 M285.5 0V274 M0 3.5H292 M0 18.5H292 M0 33.5H292 M0 48.5H292 M0 63.5H292 M0 78.5H292 M0 93.5H292 M0 108.5H292 M0 123.5H292 M0 138.5H292 M0 153.5H292 M0 168.5H292 M0 183.5H292 M0 198.5H292 M0 213.5H292 M0 228.5H292 M0 243.5H292 M0 258.5H292 M0 273.5H292" stroke="#d8d8d8" stroke-width="1" fill="none"/><path d="M112.5 172V273 M115.5 176V273 M118.5 179V273 M121.5 173V273 M124.5 174V273 M127.5 171V273 M130.5 177V273 M133.5 181V273 M136.5 183V273 M139.5 177V273 M142.5 183V273 M145.5 184V273 M151.5 181V273 M154.5 183V273 M160.5 167V273 M163.5 124V273 M166.5 178V273 M169.5 175V273 M172.5 180V273 M175.5 182V273 M178.5 179V273 M181.5 172V273 M187.5 178V273 M190.5 176V273 M193.5 179V273 M196.5 185V273 M199.5 182V273 M202.5 179V273 M205.5 182V273 M208.5 182V273 M211.5 181V273 M214.5 183V273 M217.5 183V273 M220.5 186V273 M223.5 185V273 M226.5 178V273 M229.5 179V273 M232.5 177V273 M235.5 176V273 M238.5 178V273 M241.5 178V273 M244.5 177V273 M247.5 179V273 M250.5 179V273 M253.5 181V273 M256.5 183V273 M259.5 184V273 M262.5 176V273 M265.5 175V273 M268.5 176V273 M271.5 189V273 M274.5 174V273 M277.5 181V273 M280.5 186V273 M283.5 190V273 M286.5 190V273 M289.5 188V273" stroke="#1c1c90" stroke-width="1" fill="none"/><path d="M112.5 187V273 M115.5 190V273 M118.5 190V273 M121.5 189V273 M124.5 187V273 M127.5 183V273 M130.5 190V273 M133.5 192V273 M136.5 194V273 M139.5 187V273 M142.5 191V273 M145.5 193V273 M151.5 191V273 M154.5 192V273 M160.5 167V273 M163.5 124V273 M166.5 186V273 M169.5 186V273 M172.5 190V273 M175.5 189V273 M178.5 191V273 M181.5 179V273 M187.5 189V273 M190.5 188V273 M193.5 190V273 M196.5 199V273 M199.5 192V273 M202.5 191V273 M205.5 192V273 M208.5 193V273 M211.5 193V273 M214.5 190V273 M217.5 196V273 M220.5 197V273 M223.5 197V273 M226.5 194V273 M229.5 190V273 M232.5 188V273 M235.5 188V273 M238.5 191V273 M241.5 187V273 M244.5 187V273 M247.5 191V273 M250.5 190V273 M253.5 190V273 M256.5 192V273 M259.5 193V273 M262.5 187V273 M265.5 187V273 M268.5 185V273 M271.5 198V273 M274.5 187V273 M277.5 189V273 M280.5 199V273 M283.5 201V273 M286.5 198V273 M289.5 195V273" stroke="#5a0c96" stroke-width="1" fill="none"/><path d="M113.5 187V273 M116.5 190V273 M119.5 190V273 M122.5 189V273 M125.5 187V273 M128.5 183V273 M131.5 190V273 M134.5 192V273 M137.5 194V273 M140.5 187V273 M143.5 191V273 M146.5 193V273 M152.5 191V273 M155.5 192V273 M161.5 161V273 M164.5 122V273 M167.5 186V273 M170.5 186V273 M173.5 190V273 M176.5 189V273 M179.5 191V273 M182.5 179V273 M188.5 189V273 M191.5 188V273 M194.5 190V273 M197.5 199V273 M200.5 192V273 M203.5 191V273 M206.5 192V273 M209.5 193V273 M212.5 193V273 M215.5 190V273 M218.5 196V273 M221.5 197V273 M224.5 197V273 M227.5 194V273 M230.5 190V273 M233.5 188V273 M236.5 188V273 M239.5 191V273 M242.5 187V273 M245.5 187V273 M248.5 191V273 M251.5 190V273 M254.5 190V273 M257.5 192V273 M260.5 193V273 M263.5 187V273 M266.5 187V273 M269.5 185V273 M272.5 198V273 M275.5 187V273 M278.5 189V273 M281.5 199V273 M284.5 201V273 M287.5 198V273 M290.5 195V273" stroke="#8c1464" stroke-width="1" fill="none"/></svg><div style="left:18px;top:772px;width:131px;height:38px;background:#fff;border:1px solid #000;box-sizing:border-box"></div><div style="left:21px;top:776px;width:14px;height:13px;background:#0000ff;border:1px solid #1a1a50;box-sizing:border-box"></div><div style="left:21px;top:792px;width:14px;height:13px;background:#ff0000;border:1px solid #501a1a;box-sizing:border-box"></div><div class="t" style="left:38px;top:774px;text-align:left;line-height:17px;white-space:pre;letter-spacing:-0.2px">Tx Packet:  2 569 p/s</div><div class="t" style="left:38px;top:790px;text-align:left;line-height:17px;white-space:pre;letter-spacing:-0.2px">Rx Packet:  2 338 p/s</div><div style="left:6px;top:825px;width:110px;height:19px;border:1px solid #808080;border-right-color:#fff;border-bottom-color:#fff;box-sizing:border-box"></div><div class="t" style="left:9px;top:826px;text-align:left;line-height:19px;color:#000;letter-spacing:-0.2px">enabled</div><div style="left:119px;top:825px;width:110px;height:19px;border:1px solid #808080;border-right-color:#fff;border-bottom-color:#fff;box-sizing:border-box"></div><div class="t" style="left:122px;top:826px;text-align:left;line-height:19px;color:#000;letter-spacing:-0.2px">running</div><div style="left:232px;top:825px;width:110px;height:19px;border:1px solid #808080;border-right-color:#fff;border-bottom-color:#fff;box-sizing:border-box"></div><div class="t" style="left:235px;top:826px;text-align:left;line-height:19px;color:#bcbbb4;letter-spacing:-0.2px">slave</div><div style="left:345px;top:825px;width:99px;height:19px;border:1px solid #808080;border-right-color:#fff;border-bottom-color:#fff;box-sizing:border-box"></div><div class="t" style="left:348px;top:826px;text-align:left;line-height:19px;color:#000;letter-spacing:-0.2px">link ok</div></div>
</body></html>
